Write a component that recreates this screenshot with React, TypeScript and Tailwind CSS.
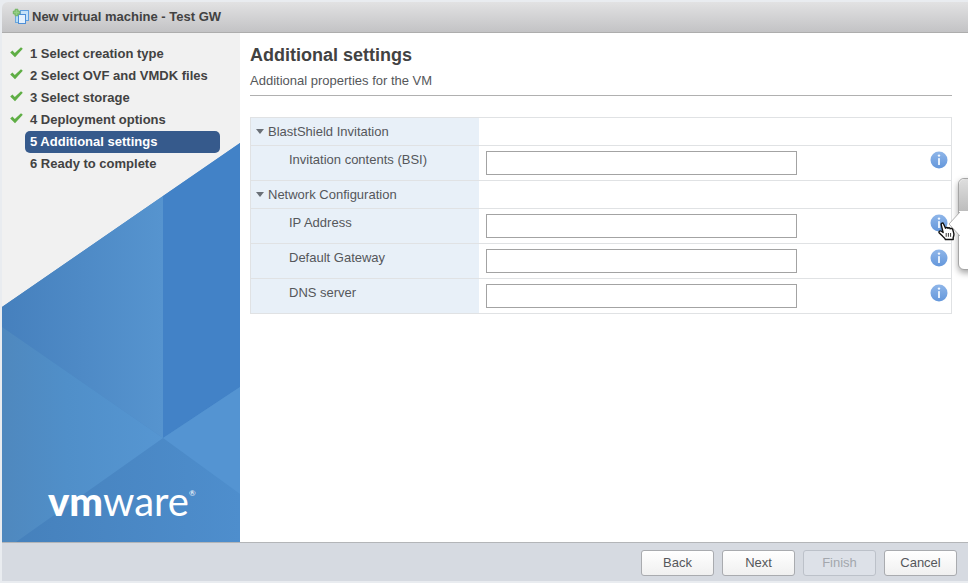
import { Fragment } from "react";
import clsx from "clsx";

const steps = [
  { label: "1 Select creation type", done: true },
  { label: "2 Select OVF and VMDK files", done: true },
  { label: "3 Select storage", done: true },
  { label: "4 Deployment options", done: true },
  { label: "5 Additional settings", current: true },
  { label: "6 Ready to complete" },
];

const groups = [
  {
    title: "BlastShield Invitation",
    fields: [{ id: "bsi", label: "Invitation contents (BSI)" }],
  },
  {
    title: "Network Configuration",
    fields: [
      { id: "ip", label: "IP Address", open: true },
      { id: "gateway", label: "Default Gateway" },
      { id: "dns", label: "DNS server" },
    ],
  },
];

const buttons = [
  { label: "Back" },
  { label: "Next" },
  { label: "Finish", disabled: true },
  { label: "Cancel" },
];

function VmIcon() {
  return (
    <svg width="18" height="18" viewBox="0 0 18 18" aria-hidden="true">
      <rect x="3.5" y="5.5" width="7" height="9" fill="#b4dcf5" stroke="#6ba6dc" />
      <rect x="8.5" y="2.5" width="8" height="10" fill="#c5e2f8" stroke="#5f9fe0" />
      <rect x="6.5" y="6.5" width="7" height="9" fill="#e4f1fd" stroke="#4d8fd8" />
      <path d="M3 .8h3l.6 1.6 1.6.6v3l-1.6.6L6 8.2H3l-.6-1.6L.8 6V3l1.6-.6z" fill="#7ab86a" />
      <path d="M4.5 2v5M2 4.5h5" stroke="#94cf84" strokeWidth="1.4" />
    </svg>
  );
}

function Check() {
  return (
    <svg width="13" height="11" viewBox="0 0 13 11" aria-hidden="true">
      <path d="M0.2 5.4 2.4 3.5 4.8 6 11 0.2 12.8 1.7 5 10.3z" fill="#5fae45" />
    </svg>
  );
}

function InfoIcon() {
  return (
    <svg width="18" height="18" viewBox="0 0 18 18" aria-hidden="true">
      <defs>
        <linearGradient id="info" x1="0" y1="0" x2="0" y2="1">
          <stop offset="0" stopColor="#8fb6e9" />
          <stop offset="1" stopColor="#6497db" />
        </linearGradient>
      </defs>
      <circle cx="9" cy="9" r="8.5" fill="url(#info)" />
      <circle cx="9" cy="4.6" r="1.2" fill="#f4f9ff" />
      <rect x="8" y="7" width="2" height="7" rx="0.6" fill="#e6f0fc" />
    </svg>
  );
}

function HandCursor() {
  return (
    <svg width="18" height="19" viewBox="0 0 18 19" aria-hidden="true">
      <path
        d="M3.2 2.6C2.9.9 5 .5 5.6 2L7.5 6.2c.4-1 2-1 2.4.1.5-.9 2-.7 2.3.4.8-.7 2.3-.2 2.6 1.1l1 3.6c.4 1.8-.2 2.9-.6 4.1v2H7.4c-.3-1.4-1.7-2.1-2.9-3.4L1.3 11C.3 9.6 2 8.2 3.4 9.3l1.7 1.2z"
        fill="#fff"
        stroke="#111"
        strokeWidth="1.4"
        strokeLinejoin="round"
      />
      <path d="M8.2 11v3.8M10.4 11v3.8M12.6 11v3.8" stroke="#222" strokeWidth="0.9" />
    </svg>
  );
}

function Backdrop() {
  return (
    <svg
      className="absolute inset-x-0 bottom-0 w-full h-[400px]"
      viewBox="0 0 238 400"
      preserveAspectRatio="none"
      aria-hidden="true"
    >
      <defs>
        <linearGradient id="upper" x1="0" x2="1">
          <stop offset="0" stopColor="#4680bd" />
          <stop offset="1" stopColor="#5694cf" />
        </linearGradient>
        <linearGradient id="left" x1="0" x2="1">
          <stop offset="0" stopColor="#4f88be" />
          <stop offset="0.4" stopColor="#508fc9" />
          <stop offset="1" stopColor="#5696d2" />
        </linearGradient>
        <linearGradient id="lower" x1="0" x2="1">
          <stop offset="0" stopColor="#4580bb" />
          <stop offset="1" stopColor="#4e8ecd" />
        </linearGradient>
      </defs>
      <path d="M0 165 238 1V400H0z" fill="url(#lower)" />
      <path d="M0 165 161 54V296L0 185z" fill="url(#upper)" />
      <path d="M0 185 161 296 14 400H0z" fill="url(#left)" />
      <path d="M161 54 238 1V245L161 296z" fill="#4282c7" />
      <path d="M161 296 238 245V352z" fill="#5494d2" />
    </svg>
  );
}

function HelpPopup() {
  return (
    <div className="absolute left-full -top-9 z-10 ml-2.5 w-60 h-[92px] rounded-md border border-[#a5a5a5] bg-white shadow-[0_3px_6px_rgba(0,0,0,0.35)]">
      <div className="h-8 rounded-t-md bg-linear-to-b from-[#dedede] to-[#bdbdbd]" />
      <svg className="absolute right-full top-8 -mr-px" width="12" height="26" viewBox="0 0 12 26" aria-hidden="true">
        <path d="M12 1 1 13 12 25" fill="#fff" stroke="#b0b0b0" />
      </svg>
    </div>
  );
}

export default function App() {
  return (
    <div className="min-h-screen overflow-hidden flex flex-col bg-[#e9ecf0] pt-0.5 pl-0.5 pb-0.5 text-[13px] font-['Liberation_Sans',Arial,sans-serif] text-[#55575b]">
      <header className="h-[31px] flex items-center gap-0.5 pl-2.5 rounded-tl-md border-b border-[#adadad] bg-linear-to-b from-[#e2e2e3] to-[#c3c3c5]">
        <VmIcon />
        <h1 className="font-bold text-[#424242]">New virtual machine - Test GW</h1>
      </header>

      <div className="flex-1 flex bg-white">
        <aside className="relative w-[238px] shrink-0 flex flex-col justify-between bg-[#f1f1f1]">
          <Backdrop />
          <ol className="relative pt-[10px] pl-2 pr-5 font-bold text-[#424242]">
            {steps.map(({ label, done, current }) => (
              <li key={label} className="flex items-center h-[22px]">
                <span className="w-[15px] pb-1">{done && <Check />}</span>
                <span
                  className={clsx(
                    "flex-1 h-[22px] leading-[22px] pl-[5px] rounded-[5px]",
                    current && "bg-[#365a8c] text-white",
                  )}
                >
                  {label}
                </span>
              </li>
            ))}
          </ol>
          <p className="relative pl-[46px] pb-[17px] flex items-start text-white text-[40px] leading-[48px] font-[Lato,sans-serif]">
            <span className="font-black">vm</span>
            <span>ware</span>
            <span className="pt-3 text-[8px] leading-[8px]">®</span>
          </p>
        </aside>

        <main className="flex-1 min-w-0 pt-[10px] pl-2.5 pr-4">
          <h2 className="text-lg leading-6 font-bold text-[#424242]">Additional settings</h2>
          <p className="mt-1.5 pb-1.5 leading-4 border-b border-[#b0b0b0]">Additional properties for the VM</p>

          <table className="mt-[21px] w-full table-fixed border-collapse border border-[#e0e2e4]">
            <colgroup>
              <col className="w-[228px]" />
              <col />
            </colgroup>
            <tbody>
              {groups.map(({ title, fields }) => (
                <Fragment key={title}>
                  <tr className="h-7 border-t border-[#e0e2e4]">
                    <th className="pl-[5px] text-left font-normal bg-[#e8f0f8]">
                      <button type="button" className="flex items-center gap-1">
                        <svg width="8" height="5" viewBox="0 0 8 5" aria-hidden="true">
                          <path d="M0 0h8L4 5z" fill="#6a7077" />
                        </svg>
                        {title}
                      </button>
                    </th>
                    <td />
                  </tr>
                  {fields.map(({ id, label, open }) => (
                    <tr key={id} className="h-[35px] border-t border-[#e0e2e4]">
                      <th className="pl-[38px] pt-1.5 align-top text-left font-normal leading-4 bg-[#e8f0f8]">
                        <label htmlFor={id}>{label}</label>
                      </th>
                      <td className="p-0 align-top">
                        <div className="flex items-start justify-between pl-[7px] pr-[3px] pt-[5px]">
                          <input id={id} type="text" className="w-[311px] h-6 px-1 bg-white border border-[#a3a3a3]" />
                          <span className="relative flex">
                            <button type="button" aria-label={"Help for " + label}>
                              <InfoIcon />
                            </button>
                            {open && (
                              <>
                                <HelpPopup />
                                <span className="absolute left-2 top-2 z-20">
                                  <HandCursor />
                                </span>
                              </>
                            )}
                          </span>
                        </div>
                      </td>
                    </tr>
                  ))}
                </Fragment>
              ))}
            </tbody>
          </table>
        </main>
      </div>

      <footer className="h-[39px] flex items-center justify-end gap-2 pr-[11px] pt-0.5 border-t border-[#b3b5b8] bg-[#d6dae1]">
        {buttons.map(({ label, disabled }) => (
          <button
            key={label}
            type="button"
            disabled={disabled}
            className={clsx(
              "w-[73px] h-[26px] rounded-[3px] border",
              disabled
                ? "border-[#bcc1c9] bg-[#dde1e8] text-[#a3a7ad]"
                : "border-[#a9abaf] bg-linear-to-b from-white to-[#f0f0f0]",
            )}
          >
            {label}
          </button>
        ))}
      </footer>
    </div>
  );
}
